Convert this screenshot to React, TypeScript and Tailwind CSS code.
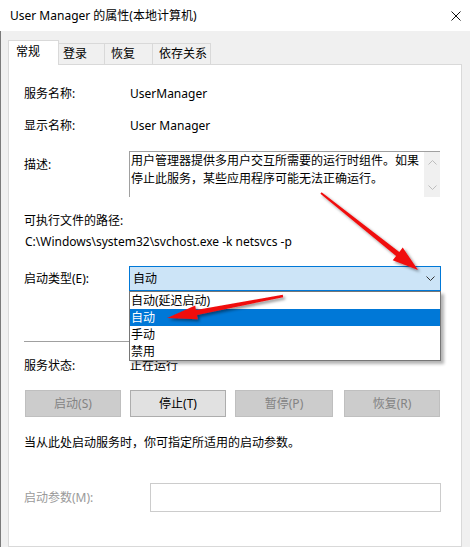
export default function App() {
  return (
    <div className="relative w-[470px] h-[547px] overflow-hidden bg-[#f0f0f0] text-[12px] text-black font-['Noto_Sans','Noto_Sans_CJK_SC',sans-serif]">
      {/* Title bar */}
      <div className="h-[31px] bg-white flex items-center justify-between pl-[10px] pr-[9px]">
        <span className="text-[12px] leading-[18px]">User Manager 的属性(本地计算机)</span>
        <svg width="10" height="10" viewBox="0 0 10 10">
          <path d="M0.5 0.5 L9.5 9.5 M9.5 0.5 L0.5 9.5" stroke="#111" strokeWidth="1" fill="none" />
        </svg>
      </div>

      {/* Body */}
      <div className="h-[516px] border-l border-[#7a7a7a] pl-[7px] pr-[8px] pt-[9px] flex flex-col">
        {/* Tabs */}
        <div className="relative z-10 flex items-end h-[24px]">
          <div className="h-[25px] -mb-px w-[51px] bg-white border-t border-l border-r border-[#d9d9d9] pl-[7px] pt-[2px] leading-[18px]">常规</div>
          <div className="h-[21px] w-[46px] bg-[#f0f0f0] border-t border-r border-[#d9d9d9] pl-[4px] leading-[20px]">登录</div>
          <div className="h-[21px] w-[48px] bg-[#f0f0f0] border-t border-r border-[#d9d9d9] pl-[6px] leading-[20px]">恢复</div>
          <div className="h-[21px] w-[58px] bg-[#f0f0f0] border-t border-r border-[#d9d9d9] pl-[6px] leading-[20px]">依存关系</div>
        </div>

        {/* Panel */}
        <div className="flex-1 bg-white border border-[#d9d9d9] pl-[15px] pr-[20px] flex flex-col">
          <div className="mt-[20px] h-[18px] flex items-center">
            <span className="w-[106px]">服务名称:</span>
            <span>UserManager</span>
          </div>
          <div className="mt-[14px] h-[18px] flex items-center">
            <span className="w-[106px]">显示名称:</span>
            <span>User Manager</span>
          </div>
          <div className="mt-[16px] flex">
            <span className="w-[105px] mt-[5px] leading-[18px]">描述:</span>
            <div className="w-[311px] h-[46px] border-t border-l border-[#a0a0a0] flex">
              <div className="flex-1 pl-[1px] leading-[18px] text-[#000]">
                用户管理器提供多用户交互所需要的运行时组件。如果
                <br />
                停止此服务，某些应用程序可能无法正确运行。
              </div>
              <div className="w-[16px] bg-[#f0f0f0] flex flex-col items-center justify-between pt-[8px] pb-[7px]">
                <svg width="9" height="5" viewBox="0 0 9 5">
                  <path d="M0.5 4.5 L4.5 0.5 L8.5 4.5" stroke="#bdbdbd" strokeWidth="1" fill="none" />
                </svg>
                <svg width="9" height="5" viewBox="0 0 9 5">
                  <path d="M0.5 0.5 L4.5 4.5 L8.5 0.5" stroke="#bdbdbd" strokeWidth="1" fill="none" />
                </svg>
              </div>
            </div>
          </div>
          <div className="mt-[15px] h-[18px] flex items-center">可执行文件的路径:</div>
          <div className="mt-[3px] h-[18px] flex items-center pl-[1px]">{"C:\\Windows\\system32\\svchost.exe -k netsvcs -p"}</div>

          <div className="mt-[15px] h-[25px] flex items-center">
            <span className="w-[105px]">启动类型(E):</span>
            <div className="relative w-[312px] h-[25px] border border-[#0078d7] bg-[#cce4f7] flex items-center justify-between pl-[3px] pr-[5px]">
              <span>自动</span>
              <svg width="9" height="5" viewBox="0 0 9 5">
                <path d="M0.5 0.5 L4.5 4.5 L8.5 0.5" stroke="#333" strokeWidth="1" fill="none" />
              </svg>
              {/* Dropdown list */}
              <div className="absolute left-[-1px] top-[24px] w-[312px] bg-white border border-[#767676] shadow-[3px_3px_3px_rgba(0,0,0,0.3)] z-20">
                <div className="h-[17px] leading-[17px] pl-[1px]">自动(延迟启动)</div>
                <div className="h-[17px] leading-[17px] pl-[1px] bg-[#0078d7] text-white">自动</div>
                <div className="h-[17px] leading-[17px] pl-[1px]">手动</div>
                <div className="h-[17px] leading-[17px] pl-[1px]">禁用</div>
              </div>
            </div>
          </div>

          <div className="mt-[50px] h-px bg-[#a0a0a0]" />

          <div className="mt-[15px] h-[18px] flex items-center">
            <span className="w-[106px]">服务状态:</span>
            <span>正在运行</span>
          </div>

          <div className="mt-[15px] h-[27px] flex">
            <div className="ml-[1px] w-[96px] h-full bg-[#cccccc] border border-[#bfbfbf] text-[#838383] flex items-center justify-center">启动(S)</div>
            <div className="ml-[9px] w-[96px] h-full bg-[#e1e1e1] border border-[#adadad] flex items-center justify-center">停止(T)</div>
            <div className="ml-[9px] w-[98px] h-full bg-[#cccccc] border border-[#bfbfbf] text-[#838383] flex items-center justify-center">暂停(P)</div>
            <div className="ml-[11px] w-[96px] h-full bg-[#cccccc] border border-[#bfbfbf] text-[#838383] flex items-center justify-center">恢复(R)</div>
          </div>

          <div className="mt-[17px] h-[18px] flex items-center">当从此处启动服务时，你可指定所适用的启动参数。</div>

          <div className="mt-[31px] h-[29px] flex items-center">
            <span className="w-[126px] text-[#9a9a9a]">启动参数(M):</span>
            <div className="w-[291px] h-full border border-[#cccccc] bg-white" />
          </div>
        </div>
      </div>

      {/* Annotation arrows */}
      <svg className="absolute left-0 top-0 pointer-events-none z-30" width="470" height="547" viewBox="0 0 470 547">
        <defs>
          <filter id="sh" x="-20%" y="-20%" width="140%" height="140%">
            <feDropShadow dx="2" dy="2" stdDeviation="1.5" floodColor="#000" floodOpacity="0.45" />
          </filter>
        </defs>
        <polygon
          filter="url(#sh)"
          fill="#f01010"
          points="320.4,193.8 396.1,255.9 392.7,260.2 418,270 402.7,247.6 399.3,251.9 321.6,192.2"
        />
        <polygon
          filter="url(#sh)"
          fill="#f01010"
          points="282.8,294.8 196.0,309.9 195.2,305.5 167,318 197.8,319.3 197.0,314.9 283.2,297.2"
        />
      </svg>
    </div>
  );
}
